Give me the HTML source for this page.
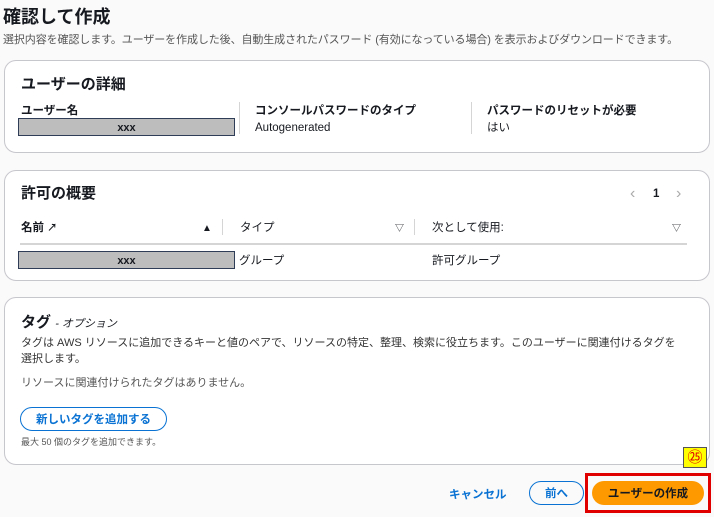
<!DOCTYPE html>
<html><head><meta charset="utf-8"><style>
*{margin:0;padding:0;box-sizing:border-box}
body{width:714px;height:517px;background:#fafafa;font-family:"Liberation Sans","Noto Sans CJK JP",sans-serif;color:#16191f;position:relative;overflow:hidden}
.a{position:absolute;white-space:nowrap;line-height:1.45;transform:translateY(3px)}
.n{transform:none}
.card{position:absolute;left:4px;width:706px;background:#fff;border:1px solid #c6c6cd;border-radius:12px}
.b{font-weight:bold}
.gray{background:#bdbdbd;border:1px solid #2f3e56;text-align:center;font-size:11px;font-weight:bold;line-height:16px;padding-top:1px}
.sep{position:absolute;width:1px;background:#d5d5d5}
.btn{display:flex;align-items:center;justify-content:center;border-radius:14px;font-size:11.5px;font-weight:bold;line-height:1;padding-top:3px;transform:none}
</style></head><body>
<div class="a b" style="left:3px;top:1px;font-size:18px">確認して作成</div>
<div class="a" style="left:3px;top:30px;font-size:11px;color:#555;letter-spacing:-0.1px">選択内容を確認します。ユーザーを作成した後、自動生成されたパスワード (有効になっている場合) を表示およびダウンロードできます。</div>

<div class="card" style="top:60px;height:93px"></div>
<div class="a b" style="left:21px;top:71px;font-size:15px">ユーザーの詳細</div>
<div class="a b" style="left:21px;top:100px;font-size:11.5px">ユーザー名</div>
<div class="a gray n" style="left:18px;top:118px;width:217px;height:18px">xxx</div>
<div class="sep" style="left:239px;top:102px;height:32px"></div>
<div class="a b" style="left:255px;top:100px;font-size:11.5px">コンソールパスワードのタイプ</div>
<div class="a" style="left:255px;top:117px;font-size:11.5px">Autogenerated</div>
<div class="sep" style="left:471px;top:102px;height:32px"></div>
<div class="a b" style="left:487px;top:100px;font-size:11.5px">パスワードのリセットが必要</div>
<div class="a" style="left:487px;top:117px;font-size:11.5px">はい</div>

<div class="card" style="top:170px;height:111px"></div>
<div class="a b" style="left:21px;top:180px;font-size:15px">許可の概要</div>
<div class="a" style="left:630px;top:179px;font-size:16px;color:#aaa">&#x2039;</div>
<div class="a b" style="left:653px;top:183px;font-size:11.5px">1</div>
<div class="a" style="left:676px;top:179px;font-size:16px;color:#aaa">&#x203A;</div>
<div class="a b" style="left:21px;top:217px;font-size:11.5px">名前 <span style="font-size:10px">&#x2197;</span></div>
<div class="a" style="left:202px;top:219px;font-size:10px">▲</div>
<div class="sep" style="left:222px;top:219px;height:16px"></div>
<div class="a" style="left:240px;top:217px;font-size:11.5px">タイプ</div>
<div class="a" style="left:395px;top:219px;font-size:9px">▽</div>
<div class="sep" style="left:414px;top:219px;height:16px"></div>
<div class="a" style="left:432px;top:217px;font-size:11.5px">次として使用:</div>
<div class="a" style="left:672px;top:219px;font-size:9px">▽</div>
<div class="a n" style="left:20px;top:243px;width:667px;height:2px;background:#d5d5d5"></div>
<div class="a gray n" style="left:18px;top:251px;width:217px;height:18px">xxx</div>
<div class="a" style="left:239px;top:250px;font-size:11.5px">グループ</div>
<div class="a" style="left:432px;top:250px;font-size:11.5px">許可グループ</div>

<div class="card" style="top:297px;height:168px"></div>
<div class="a" style="left:21px;top:309px;font-size:15px"><b>タグ</b> <i style="font-size:11px">- オプション</i></div>
<div class="a" style="left:21px;top:332px;font-size:11px;color:#333;line-height:16px">タグは AWS リソースに追加できるキーと値のペアで、リソースの特定、整理、検索に役立ちます。このユーザーに関連付けるタグを<br>選択します。</div>
<div class="a" style="left:21px;top:373px;font-size:11px;color:#555">リソースに関連付けられたタグはありません。</div>
<div class="a btn" style="left:20px;top:407px;width:147px;height:24px;border:1.5px solid #0972d3;color:#0972d3">新しいタグを追加する</div>
<div class="a" style="left:21px;top:433px;font-size:9px;color:#555">最大 50 個のタグを追加できます。</div>

<div class="a n" style="left:683px;top:447px;width:24px;height:21px;background:#ffff00;border:1px solid #555;color:#e00000;font-size:15px;text-align:center;line-height:19px">&#x3255;</div>
<div class="a b" style="left:449px;top:484px;font-size:11.5px;color:#0972d3">キャンセル</div>
<div class="a btn" style="left:529px;top:481px;width:55px;height:24px;border:1.5px solid #0972d3;color:#0972d3">前へ</div>
<div class="a n" style="left:585px;top:473px;width:126px;height:40px;border:3px solid #e00000"></div>
<div class="a btn" style="left:592px;top:481px;width:112px;height:24px;background:#ff9900">ユーザーの作成</div>
</body></html>
